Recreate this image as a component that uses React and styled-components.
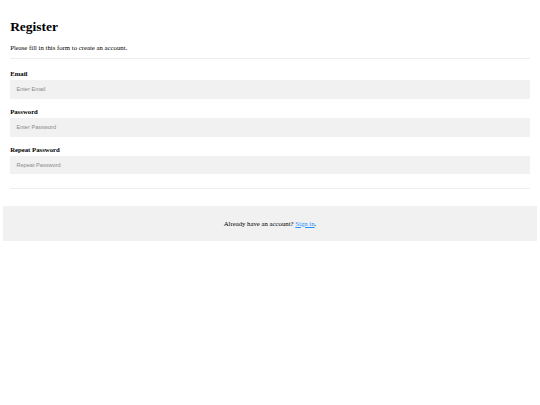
import React from "react";
import styled, { createGlobalStyle } from "styled-components";

const S = 0.421875;
const px = (v) => `${(v * S).toFixed(3)}px`;

const GlobalStyle = createGlobalStyle`
  * { box-sizing: border-box; }
  body {
    margin: ${px(8)};
    font-family: "Liberation Serif", "Times New Roman", serif;
    font-size: ${px(16)};
    color: #000;
    background: #fff;
  }
`;

const Form = styled.form`
  display: block;
`;

const Container = styled.div`
  padding: ${px(16)};
  background: ${(p) => (p.$muted ? "#f1f1f1" : "transparent")};
  text-align: ${(p) => (p.$center ? "center" : "left")};
`;

const Title = styled.h1`
  font-size: ${px(32)};
  font-weight: bold;
  margin: ${px(21.44)} 0;
  line-height: ${px(37)};
`;

const Text = styled.p`
  margin: ${px(16)} 0;
  line-height: ${px(18.5)};
`;

const Divider = styled.hr`
  border: none;
  height: 1px;
  background: #eeeeee;
  margin: ${(p) => px(p.$top)} 0 ${px(25)} 0;
`;

const Label = styled.label`
  display: block;
  font-weight: bold;
  line-height: ${px(18.5)};
  margin-top: ${px(0.6)};
`;

const Input = styled.input`
  display: block;
  width: 100%;
  height: ${px(44.5)};
  padding: 0 ${px(15)};
  margin: ${px(5)} 0 ${px(22)} 0;
  border: none;
  outline: none;
  background: #f1f1f1;
  font-family: "Liberation Sans", Arial, sans-serif;
  font-size: ${px(13.333)};
  color: #000;
  &::placeholder {
    color: #8a8a8a;
  }
`;

const Link = styled.a`
  color: dodgerblue;
  text-decoration: underline;
`;

const fields = [
  { id: "email", label: "Email", type: "text", placeholder: "Enter Email" },
  { id: "psw", label: "Password", type: "password", placeholder: "Enter Password" },
  { id: "psw-repeat", label: "Repeat Password", type: "password", placeholder: "Repeat Password" },
];

export default function App() {
  return (
    <>
      <GlobalStyle />
      <Form onSubmit={(e) => e.preventDefault()}>
        <Container>
          <Title>Register</Title>
          <Text>Please fill in this form to create an account.</Text>
          <Divider $top={16} />
          {fields.map((f) => (
            <React.Fragment key={f.id}>
              <Label htmlFor={f.id}>{f.label}</Label>
              <Input id={f.id} name={f.id} type={f.type} placeholder={f.placeholder} />
            </React.Fragment>
          ))}
          <Divider $top={32} />
        </Container>
        <Container $muted $center>
          <Text>
            Already have an account? <Link href="#">Sign in</Link>.
          </Text>
        </Container>
      </Form>
    </>
  );
}
